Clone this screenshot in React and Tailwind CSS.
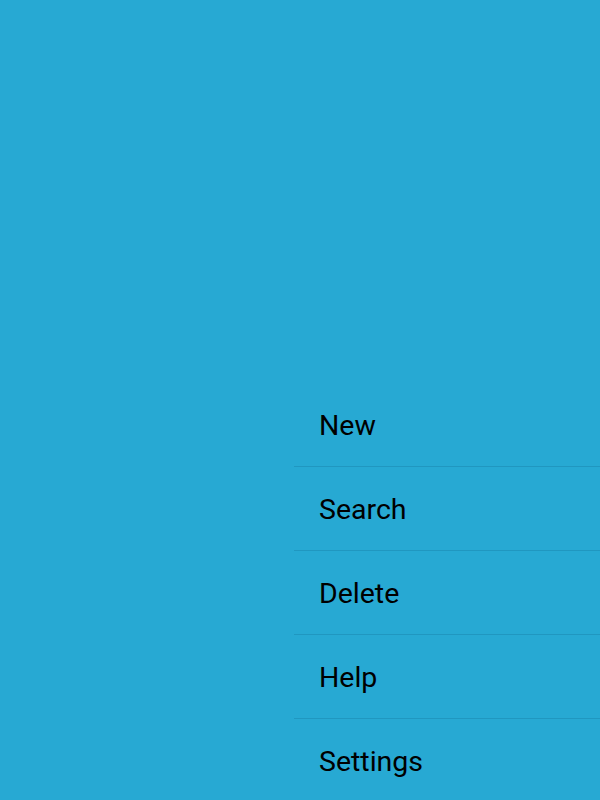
const ITEMS = ['New', 'Search', 'Delete', 'Help', 'Settings'];

export default function App() {
  return (
    <div
      className="flex h-[800px] w-[600px] flex-col overflow-hidden bg-[#27a9d3]"
      style={{ fontFamily: 'Roboto, "Noto Sans", sans-serif' }}
    >
      <div className="h-[383px] shrink-0" />
      <ul className="ml-[294px] flex flex-col">
        {ITEMS.map((label) => (
          <li
            key={label}
            className="flex h-[84px] shrink-0 items-center border-b border-[#2097c0] pl-[25px] pt-[3px] text-[28.5px] text-black"
          >
            {label}
          </li>
        ))}
      </ul>
    </div>
  );
}
